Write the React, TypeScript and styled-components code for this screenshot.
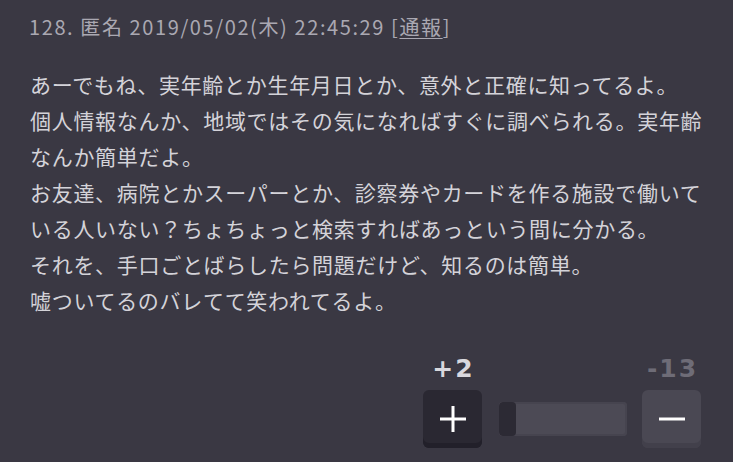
import React from 'react'
import styled, { createGlobalStyle } from 'styled-components'

const GlobalStyle = createGlobalStyle`
  html, body {
    margin: 0;
    padding: 0;
    background-color: #3a3843;
  }
  body {
    font-family: "Noto Sans CJK JP", "Noto Sans", sans-serif;
  }
`

const Comment = styled.article`
  box-sizing: border-box;
  width: 733px;
  height: 462px;
  padding: 13px 32px 0 29px;
  display: flex;
  flex-direction: column;
`

const Header = styled.div`
  color: #aaa8b2;
  font-size: 20px;
  line-height: 28px;
  letter-spacing: 1.6px;
`

const Report = styled.a`
  color: inherit;
  text-decoration: underline;
  text-decoration-thickness: 1px;
  text-underline-offset: 3px;
`

const Body = styled.p`
  margin: 25px 0 0 1px;
  color: #d4d3d9;
  font-size: 21px;
  line-height: 36px;
  letter-spacing: 0.7px;
  width: 682px;
`

const Votes = styled.div`
  margin-top: 38px;
  display: flex;
  justify-content: flex-end;
  align-items: flex-end;
`

const VoteColumn = styled.div`
  display: flex;
  flex-direction: column;
  align-items: center;
  gap: 8px;
`

const Count = styled.span<{ $muted?: boolean }>`
  font-family: "DejaVu Sans", "Noto Sans", sans-serif;
  font-weight: bold;
  font-size: 25px;
  line-height: 26px;
  letter-spacing: 2px;
  margin-right: -2px;
  color: ${p => (p.$muted ? '#6e6c77' : '#d9d8de')};
`

const VoteButton = styled.button<{ $dark?: boolean }>`
  width: 59px;
  height: 58px;
  border: 0;
  padding: 0;
  border-radius: 6px;
  display: flex;
  align-items: center;
  justify-content: center;
  background-color: ${p => (p.$dark ? '#2a2832' : '#4a4853')};
  box-shadow: inset 0 -5px 0 ${p => (p.$dark ? '#22202a' : '#42404b')};
  cursor: pointer;
`

const Bar = styled.div`
  width: 128px;
  height: 34px;
  margin: 0 15px 12px 17px;
  display: flex;
  border-radius: 4px;
  overflow: hidden;
  background-color: #4c4a55;
  box-shadow: inset 0 0 0 2px #46444f;
`

const BarPlus = styled.div`
  background-color: #2c2a34;
  border-radius: 4px;
`

function PlusIcon() {
  return (
    <svg width="32" height="32" viewBox="0 0 32 32">
      <path d="M16 3v26M3 16h26" stroke="#fff" strokeWidth="3" />
    </svg>
  )
}

function MinusIcon() {
  return (
    <svg width="32" height="32" viewBox="0 0 32 32">
      <path d="M3 16h26" stroke="#fff" strokeWidth="3" />
    </svg>
  )
}

export default function App() {
  const plus = 2
  const minus = 13
  const ratio = (plus / (plus + minus)) * 100

  return (
    <>
      <GlobalStyle />
      <Comment>
        <Header>
          128. 匿名 2019/05/02(木) 22:45:29 [<Report href="#">通報</Report>]
        </Header>
        <Body>
          あーでもね、実年齢とか生年月日とか、意外と正確に知ってるよ。<br />
          個人情報なんか、地域ではその気になればすぐに調べられる。実年齢なんか簡単だよ。<br />
          お友達、病院とかスーパーとか、診察券やカードを作る施設で働いている人いない？ちょちょっと検索すればあっという間に分かる。<br />
          それを、手口ごとばらしたら問題だけど、知るのは簡単。<br />
          嘘ついてるのバレてて笑われてるよ。
        </Body>
        <Votes>
          <VoteColumn>
            <Count>+{plus}</Count>
            <VoteButton $dark aria-label="plus">
              <PlusIcon />
            </VoteButton>
          </VoteColumn>
          <Bar>
            <BarPlus style={{ width: `${ratio}%` }} />
          </Bar>
          <VoteColumn>
            <Count $muted>-{minus}</Count>
            <VoteButton aria-label="minus">
              <MinusIcon />
            </VoteButton>
          </VoteColumn>
        </Votes>
      </Comment>
    </>
  )
}
